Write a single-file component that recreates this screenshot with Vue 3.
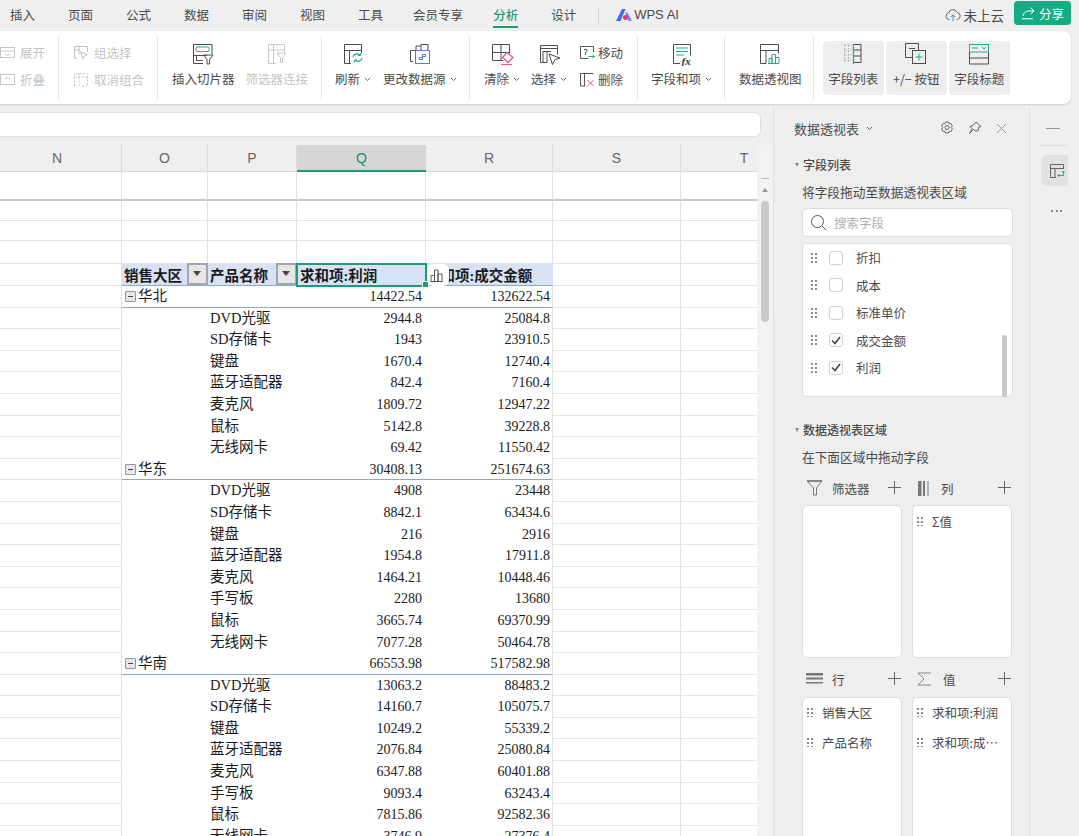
<script setup>
const tabs = [
  { t: '插入' }, { t: '页面' }, { t: '公式' }, { t: '数据' }, { t: '审阅' }, { t: '视图' }, { t: '工具' },
  { t: '会员专享', c: 'tight' }, { t: '分析', c: 'tight active' }, { t: '设计' }
]
const cols = [
  { n: 'N', w: 122 }, { n: 'O', w: 86 }, { n: 'P', w: 89 }, { n: 'Q', w: 129, sel: true },
  { n: 'R', w: 127 }, { n: 'S', w: 128 }, { n: 'T', w: 126, last: true }
]
const top = [{ h: 29, thick: true }, { h: 20 }, { h: 20 }, { h: 23 }]
const raw = `华北|14422.54|132622.54
DVD光驱|2944.8|25084.8
SD存储卡|1943|23910.5
键盘|1670.4|12740.4
蓝牙适配器|842.4|7160.4
麦克风|1809.72|12947.22
鼠标|5142.8|39228.8
无线网卡|69.42|11550.42
华东|30408.13|251674.63
DVD光驱|4908|23448
SD存储卡|8842.1|63434.6
键盘|216|2916
蓝牙适配器|1954.8|17911.8
麦克风|1464.21|10448.46
手写板|2280|13680
鼠标|3665.74|69370.99
无线网卡|7077.28|50464.78
华南|66553.98|517582.98
DVD光驱|13063.2|88483.2
SD存储卡|14160.7|105075.7
键盘|10249.2|55339.2
蓝牙适配器|2076.84|25080.84
麦克风|6347.88|60401.88
手写板|9093.4|63243.4
鼠标|7815.86|92582.36
无线网卡|3746.9|27376.4`
const rows = raw.split('\n').map((l) => {
  const [name, a, b] = l.split('|')
  return { name, a, b, group: name.startsWith('华') }
})
const fields = [
  { t: '折扣' }, { t: '成本' }, { t: '标准单价' }, { t: '成交金额', on: true }, { t: '利润', on: true }
]
</script>

<template>
  <div class="app">
    <header class="tabs">
      <span v-for="x in tabs" :key="x.t" class="tab" :class="x.c">{{ x.t }}</span>
      <i class="tab-sep"></i>
      <span class="ai">
        <svg width="16" height="13" viewBox="0 0 16 13"><path d="M0 13 6 1h3.500L4.500 13z" fill="#3f6fe8"/><path d="M9 4.500h2.500l4.500 8.500h-3.500z" fill="#6a8df0"/><circle cx="9.500" cy="9.500" r="2.500" fill="#f0327e"/></svg>
        WPS AI
      </span>
      <span class="cloud">
        <svg width="16" height="15" viewBox="0 0 16 15" fill="none" stroke="#666"><path d="M4.500 12.500H4a3.300 3.300 0 0 1-.4-6.500A4.400 4.400 0 0 1 12 5.400a3.600 3.600 0 0 1 .3 7.100h-.8"/><path d="M8 14V8M5.800 10 8 7.800 10.200 10" stroke="#3d87d8"/></svg>
        未上云
      </span>
      <span class="share">
        <svg width="15" height="14" viewBox="0 0 15 14" fill="none" stroke="#fff"><path d="M9.500 1.500 13 5l-3.500 3.200M13 5H8C4.500 5 2.500 7 2 10"/><path d="M1 12.800h11"/></svg>
        分享
      </span>
    </header>

    <section class="ribbon">
      <div class="grp g1">
        <div class="smalls off">
          <div class="small"><svg width="15" height="13" viewBox="0 0 15 13" fill="none" stroke="#c6c6c6"><rect x=".5" y="1.500" width="14" height="10"/><path d="M.5 5h14M5 8l2.500 1.500L10 8"/></svg>展开</div>
          <div class="small"><svg width="15" height="13" viewBox="0 0 15 13" fill="none" stroke="#c6c6c6"><rect x=".5" y="1.500" width="14" height="10"/><path d="M5 6l2.500-1.500L10 6"/></svg>折叠</div>
        </div>
      </div>
      <div class="grp g2">
        <div class="smalls off">
          <div class="small"><svg width="15" height="15" viewBox="0 0 15 15" fill="none" stroke="#c2c2c2"><path d="M3 13.500H.5v-12h13V7M.5 5h6M5 1.500V9"/><path d="m6.500 7 7 2.500-3 1.300-1.500 3z"/></svg>组选择</div>
          <div class="small"><svg width="15" height="15" viewBox="0 0 15 15" fill="none" stroke="#c2c2c2" stroke-dasharray="2 1.500"><path d="M.5 14V1.500h13V14M.5 5h13M5 1.500V14M8 14h5"/></svg>取消组合</div>
        </div>
      </div>
      <div class="grp g3">
        <div class="big">
          <svg width="24" height="24" viewBox="0 0 24 24" fill="none" stroke="#4d4d4d"><path d="M12 21.500H2.500v-19h18.500v9.500"/><rect x="5" y="5" width="13" height="4.500" rx="1" stroke="#25ad8b"/><path d="M2.500 13.500H16M5.500 13.500v5h6"/><path d="m12.500 13 9.500 0-3.500 4.500v4.500h-2.500v-4.500z"/></svg>
          <span>插入切片器</span>
        </div>
        <div class="big off">
          <svg width="24" height="24" viewBox="0 0 24 24" fill="none" stroke="#c8c8c8"><path d="M11 21.500H3.500v-19h16v8M3.500 8H19M8.500 2.500v19"/><path d="m12 11 9 0-3.500 4.500v5h-2v-5z"/></svg>
          <span>筛选器连接</span>
        </div>
      </div>
      <div class="grp g4">
        <div class="big">
          <svg width="24" height="24" viewBox="0 0 24 24" fill="none" stroke="#4d4d4d"><path d="M10 21.500H3.500v-19h17v8.500M3.500 8.500h17M8.500 8.500v13"/><path d="M12 15a4 4 0 0 1 7-1.800M21 16a4 4 0 0 1-7 2" stroke="#25ad8b" stroke-width="1.300"/><path d="M19.500 11v2.500H17M13.500 20.500V18H16" stroke="#25ad8b"/></svg>
          <span>刷新<svg class="chev" width="7" height="5" viewBox="0 0 7 5" fill="none" stroke="#666"><path d="m1 1 2.500 2.500L6 1"/></svg></span>
        </div>
        <div class="big">
          <svg width="24" height="24" viewBox="0 0 24 24" fill="none" stroke="#4d4d4d"><path d="M5 19.500H2.500V8.500H8M8 8V4h5M13 8V2.500h7V8"/><rect x="7.500" y="8.500" width="14" height="13" stroke="#4a86d0"/><path d="M11 17.500v-2h3.500v-3h3v2h-3v3z" stroke="#4a86d0"/></svg>
          <span>更改数据源<svg class="chev" width="7" height="5" viewBox="0 0 7 5" fill="none" stroke="#666"><path d="m1 1 2.500 2.500L6 1"/></svg></span>
        </div>
      </div>
      <div class="grp g5">
        <div class="big">
          <svg width="24" height="24" viewBox="0 0 24 24" fill="none" stroke="#4d4d4d"><path d="M13 18.500H2.500v-16h17v9M11 2.500v16M2.500 10.500h17"/><path d="m17 10.500 6 5-5 5-5.500-5z" stroke="#e8559a" stroke-width="1.300"/><path d="M11 22.500h11" stroke="#e8559a"/></svg>
          <span>清除<svg class="chev" width="7" height="5" viewBox="0 0 7 5" fill="none" stroke="#666"><path d="m1 1 2.500 2.500L6 1"/></svg></span>
        </div>
        <div class="big">
          <svg width="24" height="24" viewBox="0 0 24 24" fill="none" stroke="#4d4d4d"><path d="M10 20.500H3.500v-17h17v9M3.500 6.500h17M6 9.500h8M6 9.500v11M10 9.500v11"/><path d="m12 12 11 4-5 1.500-2.500 5z"/></svg>
          <span>选择<svg class="chev" width="7" height="5" viewBox="0 0 7 5" fill="none" stroke="#666"><path d="m1 1 2.500 2.500L6 1"/></svg></span>
        </div>
        <div class="smalls">
          <div class="small"><svg width="15" height="15" viewBox="0 0 15 15" fill="none" stroke="#555"><path d="M13.500 7V1.500H.5v12h8"/><path d="M4 4.500h3v2l-1.500 1V10"/><path d="M8.500 11.500h6M12.500 9.500l2 2-2 2" stroke="#25ad8b"/></svg>移动</div>
          <div class="small"><svg width="15" height="15" viewBox="0 0 15 15" fill="none" stroke="#555"><path d="M5 14H.5V1.500h13.000M4.500 1.500V14"/><path d="m7.500 8 6 6M13.500 8l-6 6" stroke="#e8559a"/></svg>删除</div>
        </div>
      </div>
      <div class="grp g6">
        <div class="big">
          <svg width="24" height="24" viewBox="0 0 24 24" fill="none" stroke="#4d4d4d"><path d="M10 21.500H3.500v-19h17v11"/><path d="M6 6h12M6 9.500h12M6 13h8" stroke="#25ad8b"/><text x="11.500" y="22.500" class="fx">fx</text></svg>
          <span>字段和项<svg class="chev" width="7" height="5" viewBox="0 0 7 5" fill="none" stroke="#666"><path d="m1 1 2.500 2.500L6 1"/></svg></span>
        </div>
      </div>
      <div class="grp g7">
        <div class="big">
          <svg width="24" height="24" viewBox="0 0 24 24" fill="none" stroke="#4d4d4d"><path d="M8 21.500H2.500v-19h18v9M2.500 8.500h18M8 8.500v13"/><path d="M11 21.500v-5h3v5M14 21.500v-9h3.500v9M17.500 21.500v-6h3.500v6zM10 21.500h11" stroke="#25ad8b"/></svg>
          <span>数据透视图</span>
        </div>
      </div>
      <div class="grp g8">
        <div class="big tool">
          <svg width="20" height="22" viewBox="0 0 20 22" fill="none" stroke="#4d4d4d"><path d="M1.500 2v18M5.500 2v18M1.500 2H9M1.500 7H9M1.500 12H9M1.500 17H9" stroke="#aaa" stroke-dasharray="1.500 1.500"/><path d="M10.500 1.500H18v18h-7.500M11 7h7M11 13h7"/><path d="M10.500 1v20" stroke="#25ad8b" stroke-width="1.300"/></svg>
          <span>字段列表</span>
        </div>
        <div class="big tool">
          <svg width="22" height="22" viewBox="0 0 22 22" fill="none" stroke="#4d4d4d"><path d="M7 14.500H.5V.5h13v7"/><path d="M4 5.500h6"/><rect x="7.500" y="7.500" width="13" height="13"/><path d="M10.500 14h7M14 10.500v7" stroke="#25ad8b"/></svg>
          <span>+/− 按钮</span>
        </div>
        <div class="big tool">
          <svg width="22" height="22" viewBox="0 0 22 22" fill="none" stroke="#4d4d4d"><path d="M1.500 9v12h19V9M1.500 15h19"/><rect x="1.500" y="1.500" width="19" height="7.500" stroke="#25ad8b"/><path d="M4 5h6M14 4l2 2 2-2" stroke="#25ad8b"/></svg>
          <span>字段标题</span>
        </div>
      </div>
    </section>

    <main class="body">
      <div class="left">
        <div class="formula"></div>
        <div class="sheetwrap">
          <div class="sheet">
            <div class="colhead">
              <div v-for="c in cols" :key="c.n" class="ch" :class="{ sel: c.sel, last: c.last }" :style="{ width: c.w + 'px' }">{{ c.n }}</div>
            </div>
            <div v-for="(r, i) in top" :key="'t' + i" class="row" :class="{ thick: r.thick }" :style="{ height: r.h + 'px' }">
              <div v-for="c in cols" :key="c.n" class="cell" :class="{ last: c.last }" :style="{ width: c.w + 'px' }"></div>
            </div>
            <div class="row phead">
              <div class="cell w-n"></div>
              <div class="pc w-o hd">销售大区<span class="dd"></span></div>
              <div class="pc w-p hd">产品名称<span class="dd"></span></div>
              <div class="pc w-q hd q">求和项:利润<i class="handle"></i></div>
              <div class="pc w-r hd r">求和项:成交金额<span class="float"><svg width="13" height="13" viewBox="0 0 13 13" fill="none" stroke="#555"><path d="M1 12.500V6.500h3.500v6M4.500 12.500V1h3.500v11.500M8 12.500V5h4v7.500M.5 12.500h12"/></svg></span></div>
              <div class="cell w-s"></div>
              <div class="cell w-t last"></div>
            </div>
            <div v-for="(r, i) in rows" :key="i" class="row pivot">
              <div class="cell w-n"></div>
              <div class="pc w-o grp-name" :class="{ gb: r.group }"><template v-if="r.group"><i class="minus"></i>{{ r.name }}</template></div>
              <div class="pc w-p" :class="{ gb: r.group }">{{ r.group ? '' : r.name }}</div>
              <div class="pc w-q num" :class="{ gb: r.group }">{{ r.a }}</div>
              <div class="pc w-r num nr" :class="{ gb: r.group }">{{ r.b }}</div>
              <div class="cell w-s"></div>
              <div class="cell w-t last"></div>
            </div>
          </div>
          <div class="vscroll">
            <i class="vmin"></i>
            <i class="vtri"></i>
            <i class="vthumb"></i>
          </div>
        </div>
      </div>

      <aside class="panel">
        <div class="phd">
          <span class="ptitle">数据透视表</span>
          <svg class="pchev" width="7" height="5" viewBox="0 0 7 5" fill="none" stroke="#666"><path d="m1 1 2.500 2.500L6 1"/></svg>
          <svg class="gear" width="14" height="14" viewBox="0 0 14 14" fill="none" stroke="#666"><path d="m5.500 1 3 0 .6 1.700 1.800-.3 1.500 2.600-1.200 1.500 1.200 1.500-1.500 2.600-1.800-.3-.6 1.700h-3l-.6-1.700-1.800.3L1.600 8l1.200-1.500L1.600 5l1.500-2.600 1.800.3z"/><circle cx="7" cy="6.500" r="2"/></svg>
          <svg width="14" height="14" viewBox="0 0 14 14" fill="none" stroke="#666"><path d="m8 1 5 4.500-2.500.8-.3 3.200-2.700.7-2-2L1.500 12.500l2.800-4.700L2 5.500l3-1z"/></svg>
          <svg class="px" width="11" height="11" viewBox="0 0 11 11" stroke="#999" fill="none"><path d="m1 1 9 9M10 1l-9 9"/></svg>
        </div>
        <div class="sec first"><i class="tri"></i>字段列表</div>
        <div class="desc d1">将字段拖动至数据透视表区域</div>
        <div class="search">
          <svg width="17" height="17" viewBox="0 0 17 17" fill="none" stroke="#555"><circle cx="7.500" cy="7.500" r="6"/><path d="m12 12 4 4"/></svg>
          <span>搜索字段</span>
        </div>
        <div class="flist">
          <div v-for="f in fields" :key="f.t" class="fitem">
            <i class="dots"></i>
            <i class="cb">
              <svg v-if="f.on" width="10" height="9" viewBox="0 0 10 9" fill="none" stroke="#444" stroke-width="1.600"><path d="m1 4.500 3 3L9 1"/></svg>
            </i>
            <span>{{ f.t }}</span>
          </div>
          <i class="fthumb"></i>
        </div>
        <div class="sec second"><i class="tri"></i>数据透视表区域</div>
        <div class="desc d1">在下面区域中拖动字段</div>
        <div class="zones">
          <div class="zone">
            <div class="zh">
              <svg width="17" height="16" viewBox="0 0 17 16" fill="none" stroke="#777"><path d="M1 1h15l-5.500 7v7H7.500V8L1 1z"/><path d="M1 1h15" stroke-width="1.500"/></svg>
              <span>筛选器</span><b class="plus"></b>
            </div>
            <div class="zb h1"></div>
          </div>
          <div class="zone">
            <div class="zh">
              <svg class="ci" width="12" height="15" viewBox="0 0 12 15"><rect x="0" y="0" width="3.500" height="15" fill="#777"/><rect x="5" y="0" width="2" height="15" fill="#777"/><rect x="9.500" y="0" width="1" height="15" fill="#777"/></svg>
              <span class="zs">列</span><b class="plus"></b>
            </div>
            <div class="zb h1">
              <div class="zi sm"><i class="dots"></i><span>Σ值</span></div>
            </div>
          </div>
          <div class="zone">
            <div class="zh">
              <svg width="17" height="12" viewBox="0 0 17 12" fill="#777"><rect y="0" width="17" height="2.500"/><rect y="4.500" width="17" height="2"/><rect y="9" width="17" height="1.500"/></svg>
              <span>行</span><b class="plus"></b>
            </div>
            <div class="zb h2">
              <div class="zi"><i class="dots"></i><span>销售大区</span></div>
              <div class="zi"><i class="dots"></i><span>产品名称</span></div>
            </div>
          </div>
          <div class="zone">
            <div class="zh">
              <svg class="ci2" width="15" height="14" viewBox="0 0 15 14" fill="none" stroke="#888"><path d="M14 1H1l6 6-6 6h13"/></svg>
              <span class="zs">值</span><b class="plus"></b>
            </div>
            <div class="zb h2">
              <div class="zi"><i class="dots"></i><span>求和项:利润</span></div>
              <div class="zi"><i class="dots"></i><span class="clip">求和项:成交金额</span></div>
            </div>
          </div>
        </div>
      </aside>

      <nav class="rail">
        <i class="rmin"></i>
        <i class="rdiv"></i>
        <div class="rbtn">
          <svg width="15" height="16" viewBox="0 0 15 16" fill="none" stroke="#666"><path d="M6 14.500H.5v-13h13V6M.5 5.500h13M5 5.500v9"/><path d="M8 12.500h5.500V8M12 9.500l1.500-1.500 1.500 1.500M9.500 11 8 12.500 9.500 14" stroke="#25ad8b"/></svg>
        </div>
        <div class="rdots"><i></i><i></i><i></i></div>
      </nav>
    </main>
  </div>
</template>

<style>
html, body { margin: 0; background: #efefef; }
</style>

<style scoped>
.app {
  width: 1079px; height: 836px; overflow: hidden; background: #efefef;
  display: flex; flex-direction: column;
  font-family: "Noto Sans CJK SC", "Liberation Sans", sans-serif;
  color: #4a4a4a; font-size: 12.5px;
}
i { display: block; font-style: normal; }

.tabs { height: 31px; flex: none; display: flex; align-items: center; padding: 0 8px 0 10px; gap: 33px; box-sizing: border-box; }
.tab { position: relative; line-height: 26px; height: 26px; margin-top: -2px; }
.tab.tight { margin-left: -3px; }
.tab.active { color: #1d9b79; font-weight: 500; }
.tab.active::after { content: ""; position: absolute; left: 0; right: 0; bottom: 0; height: 2px; background: #1d9b79; }
.tab-sep { width: 1px; height: 16px; background: #d4d4d4; margin-left: -11px; }
.ai { display: flex; align-items: center; gap: 2px; margin-left: -16px; font-family: "Liberation Sans", sans-serif; font-size: 13px; white-space: nowrap; margin-top: -2px; }
.cloud { margin-left: auto; display: flex; align-items: center; gap: 3px; font-size: 13.5px; margin-top: -2px; }
.share { margin-left: -23px; width: 57px; height: 24px; background: #16ab85; color: #fff; border-radius: 4px; display: flex; align-items: center; justify-content: center; gap: 3px; margin-top: -5px; font-size: 12.5px; }

.ribbon {
  flex: none; height: 73px; width: 1081px; margin-left: -10px; background: #fff; border-radius: 8px;
  display: flex; box-shadow: 0 1px 2px rgba(0,0,0,.14); box-sizing: border-box; padding-top: 5px;
}
.grp { display: flex; height: 64px; box-sizing: border-box; padding-left: 13px; border-right: 1px solid #e6e6e6; flex: none; }
.g1 { width: 69px; padding-left: 10px; }
.g2 { width: 99px; padding-left: 15px; }
.g3 { width: 164px; gap: 11px; padding-left: 14px; }
.g4 { width: 148px; gap: 12px; }
.g5 { width: 168px; gap: 11px; padding-left: 14px; }
.g6 { width: 87px; }
.g7 { width: 89px; padding-left: 14px; }
.g8 { border-right: 0; padding-left: 9px; gap: 2.500px; }
.off { color: #c4c4c4; }
.smalls { display: flex; flex-direction: column; gap: 9px; padding-top: 7px; }
.small { display: flex; align-items: center; gap: 5px; height: 18px; white-space: nowrap; }
.g5 .small { gap: 3px; }
.g5 .smalls { margin-left: 2px; }
.big { display: flex; flex-direction: column; align-items: center; white-space: nowrap; padding-top: 6px; }
.big > svg { height: 24px; margin-bottom: 4px; flex: none; }
.big > span { line-height: 18px; display: flex; align-items: center; }
.chev { margin-left: 4px; }
.tool { background: #eeeeee; border-radius: 4px; width: 60.500px; height: 54px; margin-top: 5px; padding-top: 1px; box-sizing: border-box; }
.fx { font: italic 700 11px "Liberation Serif", serif; fill: #333; stroke: none; }

.body { flex: 1; display: flex; min-height: 0; }
.left { width: 773px; flex: none; display: flex; flex-direction: column; }
.formula { height: 25px; margin: 8px 12px 8px -10px; background: #fff; border: 1px solid #e0e0e0; border-radius: 6px; box-sizing: border-box; flex: none; }
.sheetwrap { flex: 1; display: flex; min-height: 0; overflow: hidden; }
.sheet { width: 757px; flex: none; background: #fff; overflow: hidden; font-family: "Liberation Serif", "Noto Sans CJK SC", serif; }
.colhead { display: flex; height: 27px; background: #efefef; }
.ch { box-sizing: border-box; height: 27px; border-right: 1px solid #dcdcdc; border-bottom: 1px solid #d9d9d9; text-align: center; font: 14px/26px "Liberation Sans", sans-serif; color: #666; flex: none; }
.ch:first-child { padding-right: 7px; }
.ch.sel { background: #d6d6d6; color: #1d8f6f; border-bottom: 2px solid #1d9b79; border-right: 0; }
.ch.last { border-right: 0; }
.row { display: flex; }
.cell { box-sizing: border-box; border-right: 1px solid #e3e3e3; border-bottom: 1px solid #e3e3e3; flex: none; height: 100%; }
.cell.last { border-right: 0; }
.thick .cell { border-bottom: 2px solid #c9c9c9; }
.w-n { width: 122px; } .w-o { width: 86px; } .w-p { width: 89px; } .w-q { width: 129px; } .w-r { width: 127px; } .w-s { width: 128px; } .w-t { width: 126px; }
.phead { height: 22px; position: relative; }
.pc { box-sizing: border-box; flex: none; height: 100%; color: #1a1a1a; font-size: 14.500px; white-space: nowrap; line-height: 21px; }
.hd { background: #d9e2f4; font-weight: 700; border-bottom: 1px solid #8fa8c9; position: relative; padding-left: 2px; line-height: 24px; }
.dd { position: absolute; right: 0; top: -1px; width: 21px; height: 22px; background: #e6e6e6; border: 2px solid #a0a6b4; box-sizing: border-box; }
.dd::after { content: ""; position: absolute; left: 4px; top: 6px; border: 4.500px solid transparent; border-top: 5px solid #444; border-bottom: 0; }
.q { outline: 2px solid #1d9b79; outline-offset: -1px; padding-left: 3px; position: relative; z-index: 2; }
.handle { position: absolute; right: -3px; bottom: -3px; width: 5px; height: 5px; background: #1d9b79; border: 1px solid #fff; }
.r { padding-left: 0; overflow: visible; }
.float { position: absolute; left: 1px; top: 0; width: 22px; height: 22px; background: #fff; border-radius: 6px; display: flex; align-items: center; justify-content: center; padding-right: 3px; box-sizing: border-box; z-index: 3; }
.pivot { height: 21.600px; }
.pivot .cell { border-bottom-color: #e6e6e6; }
.pivot .w-n { border-right-color: #dcdcdc; }
.pivot .pc { padding-left: 2px; }
.pivot .w-r { border-right: 1px solid #e3e3e3; }
.gb { border-bottom: 1px solid #8fa8c9; }
.num { text-align: right; font-size: 14px; padding-right: 4px; }
.num.nr { padding-right: 2px; }
.grp-name { display: flex; align-items: center; gap: 2px; padding-left: 3px !important; }
.minus { width: 9px; height: 9px; border: 1px solid #8e97a8; background: #e6e8ee; position: relative; border-radius: 1px; flex: none; }
.minus::after { content: ""; position: absolute; left: 2px; right: 2px; top: 4px; height: 1px; background: #444; }

.vscroll { width: 16px; flex: none; background: #f2f2f2; position: relative; display: flex; flex-direction: column; align-items: center; padding-top: 33px; box-sizing: border-box; }
.vmin { width: 8px; height: 1px; background: #bbb; }
.vtri { margin-top: 9px; border: 3px solid transparent; border-bottom: 4px solid #999; border-top: 0; }
.vthumb { margin-top: 9px; width: 8px; height: 121px; border-radius: 4px; background: #cacaca; }

.panel { width: 257px; flex: none; box-sizing: border-box; margin-top: 4px; border-left: 1px solid #dfdfdf; border-right: 1px solid #dfdfdf; background: #eeeeee; padding-left: 28px; overflow: hidden; }
.phd { height: 40px; display: flex; align-items: center; margin-left: -8px; }
.ptitle { font-size: 13px; }
.pchev { margin-left: 7px; margin-right: 67px; }
.gear { margin-right: 14px; }
.px { margin-left: 14px; }
.sec { height: 20px; line-height: 20px; font-size: 12px; font-weight: 500; position: relative; padding-left: 1px; }
.tri { position: absolute; left: -7px; top: 8px; border: 2.500px solid transparent; border-top: 4px solid #888; border-bottom: 0; }
.first { margin-top: 7px; }
.second { margin-top: 23px; }
.desc { height: 18px; line-height: 18px; font-size: 12.700px; margin-top: 8px; }
.search { width: 211px; height: 29px; margin-top: 7px; background: #fff; border: 1px solid #dcdcdc; border-radius: 5px; box-sizing: border-box; display: flex; align-items: center; padding-left: 7px; gap: 7px; color: #b0b0b0; }
.flist { width: 211px; height: 154px; margin-top: 6px; background: #fff; border: 1px solid #dcdcdc; border-radius: 5px; box-sizing: border-box; position: relative; }
.fitem { height: 27.500px; display: flex; align-items: center; padding-left: 8px; }
.dots { width: 6px; height: 10px; flex: none; background-image: radial-gradient(circle at 1px 1px, #888 .9px, transparent 1.100px); background-size: 4px 4px; }
.cb { width: 14px; height: 14px; margin-left: 12px; margin-right: 13px; background: #fff; border: 1px solid #d0d0d0; border-radius: 3px; box-sizing: border-box; display: flex; align-items: center; justify-content: center; flex: none; }
.fthumb { position: absolute; right: 5px; top: 91px; width: 5px; height: 62px; background: #c8c8c8; border-radius: 3px; }
.zones { display: grid; grid-template-columns: 100px 100px; column-gap: 10px; row-gap: 12px; margin-top: 13px; }
.zh { height: 20px; display: flex; align-items: center; padding-left: 4px; gap: 9px; position: relative; margin-top: -1px; }
.zh .ci { margin-left: 2px; margin-right: 2px; }
.zh .ci2 { margin-right: 2px; margin-left: 1px; }
.plus { position: absolute; right: 1px; top: 3px; width: 13px; height: 13px; background: linear-gradient(#666,#666) center/13px 1px no-repeat, linear-gradient(#666,#666) center/1px 13px no-repeat; }
.zb { margin-top: 7px; background: #fff; border: 1px solid #dcdcdc; border-radius: 5px; box-sizing: border-box; }
.h1 { height: 153px; }
.h2 { height: 200px; margin-top: 8px; }
.zi { height: 30px; display: flex; align-items: center; padding-left: 4px; gap: 9px; }
.zi:first-child { margin-top: -1px; }
.zi .dots { height: 9px; }
.zi.sm { gap: 9px; height: 32px; }
.clip { width: 68px; overflow: hidden; text-overflow: ellipsis; white-space: nowrap; }

.rail { flex: 1; margin-top: 4px; display: flex; flex-direction: column; padding-left: 11px; }
.rmin { width: 14px; height: 1px; background: #999; margin: 20px 0 0 5px; }
.rdiv { width: 28px; height: 1px; background: #ddd; margin-top: 16px; margin-left: -1px; }
.rbtn { width: 27px; height: 31px; margin-top: 9px; background: #e2e2e2; border-radius: 6px 0 0 6px; display: flex; align-items: center; justify-content: flex-end; padding-right: 3px; box-sizing: border-box; }
.rdots { display: flex; gap: 2.500px; margin: 24px 0 0 10px; }
.rdots i { width: 2px; height: 2px; background: #666; border-radius: 50%; }
</style>
